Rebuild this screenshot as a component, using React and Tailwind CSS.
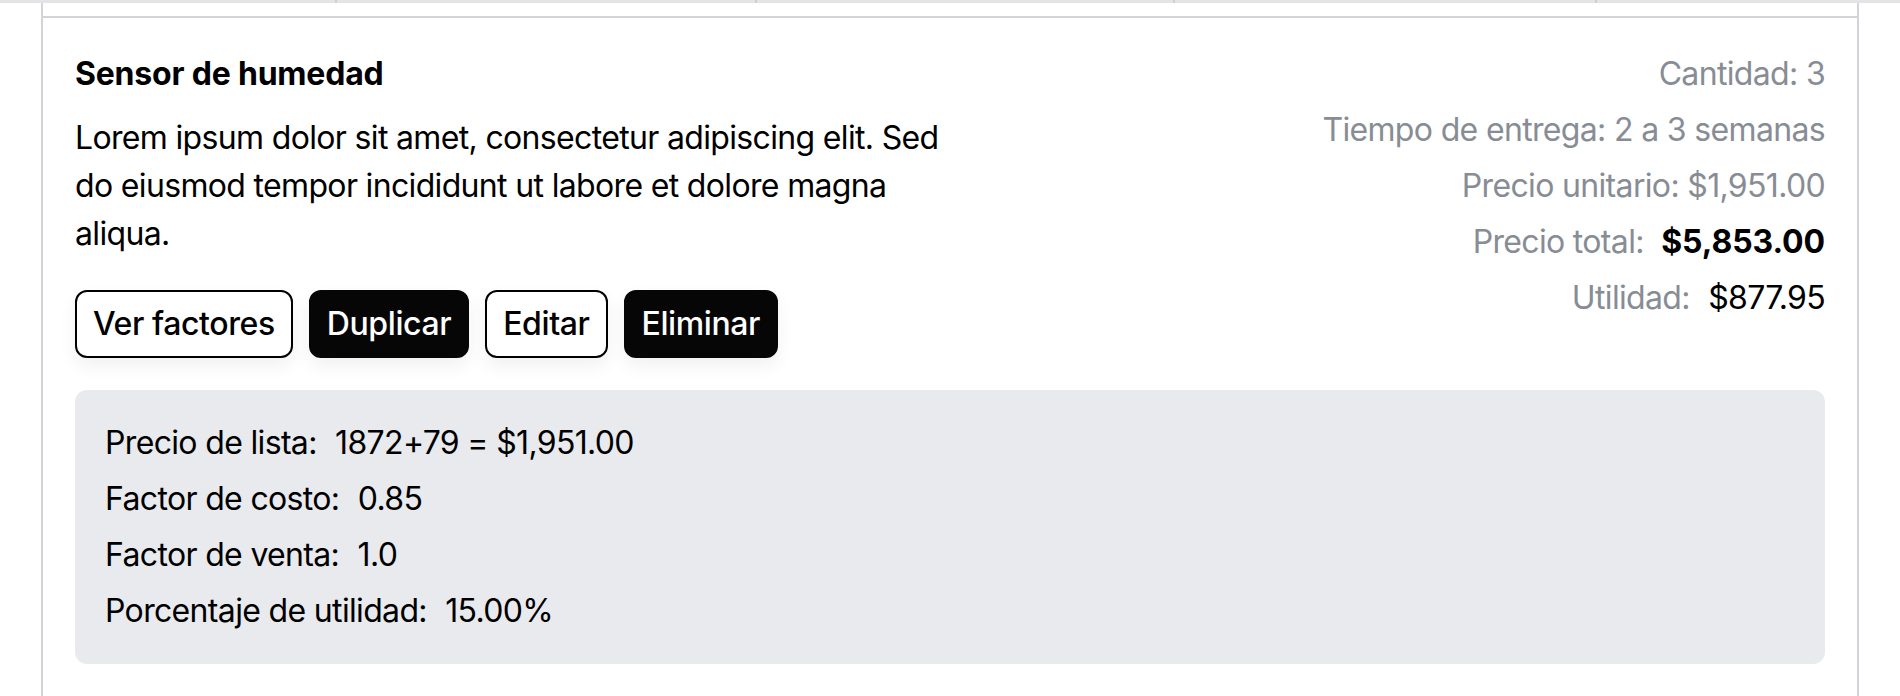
import React from 'react';

const summary = [
  { label: 'Cantidad: 3' },
  { label: 'Tiempo de entrega: 2 a 3 semanas' },
  { label: 'Precio unitario: $1,951.00' },
  { label: 'Precio total:', value: '$5,853.00', bold: true },
  { label: 'Utilidad:', value: '$877.95' },
];

const factors = [
  ['Precio de lista:', '1872+79 = $1,951.00'],
  ['Factor de costo:', '0.85'],
  ['Factor de venta:', '1.0'],
  ['Porcentaje de utilidad:', '15.00%'],
];

const Button = ({ children, dark = false }) => (
  <button
    className={`rounded-[12px] border-2 px-[16px] py-[8px] text-[32px] font-medium leading-[48px] tracking-[-0.4px] shadow-[0_8px_18px_rgba(0,0,0,0.06)] ${
      dark ? 'border-[#060606] bg-[#060606] text-white' : 'border-black bg-white text-black'
    }`}
  >
    {children}
  </button>
);

export default function App() {
  return (
    <div className="min-h-screen bg-white font-['Inter','Noto_Sans',sans-serif] text-black">
      {/* tail of the row above */}
      <div className="flex h-[3px] bg-[#e4e4e4]">
        <div className="w-[337px] border-r-2 border-[#cfcfcf]" />
        <div className="w-[420px] border-r-2 border-[#cfcfcf]" />
        <div className="w-[418px] border-r-2 border-[#cfcfcf]" />
        <div className="w-[422px] border-r-2 border-[#cfcfcf]" />
        <div className="flex-1" />
      </div>

      <div className="mx-[41px] border-x-2 border-[#d1d5db] pt-[13px]">
        <div className="border-t-2 border-[#d1d5db] p-[32px] tracking-[-0.66px]">
          <div className="flex justify-between">
            <div className="w-1/2">
              <h2 className="text-[32px] font-bold leading-[48px] tracking-[-0.2px]">Sensor de humedad</h2>
              <p className="mt-[16px] text-[32px] leading-[48px]">
                Lorem ipsum dolor sit amet, consectetur adipiscing elit. Sed do eiusmod tempor
                incididunt ut labore et dolore magna aliqua.
              </p>
              <div className="mt-[32px] flex gap-[16px]">
                <Button>Ver factores</Button>
                <Button dark>Duplicar</Button>
                <Button>Editar</Button>
                <Button dark>Eliminar</Button>
              </div>
            </div>

            <div className="flex flex-col items-end gap-[8px] text-right text-[32px] leading-[48px] text-[#878c95]">
              {summary.map((row) => (
                <p key={row.label}>
                  {row.label}
                  {row.value && (
                    <span
                      className={`ml-[10px] text-black ${row.bold ? 'font-bold tracking-[-0.1px]' : ''}`}
                    >
                      {' '}
                      {row.value}
                    </span>
                  )}
                </p>
              ))}
            </div>
          </div>

          <div className="mt-[32px] flex flex-col gap-[8px] rounded-[12px] bg-[#e9eaee] px-[30px] py-[29px] text-[32px] leading-[48px]">
            {factors.map(([label, value]) => (
              <p key={label}>
                {label}
                <span className="ml-[10px]"> {value}</span>
              </p>
            ))}
          </div>
        </div>
      </div>
    </div>
  );
}
